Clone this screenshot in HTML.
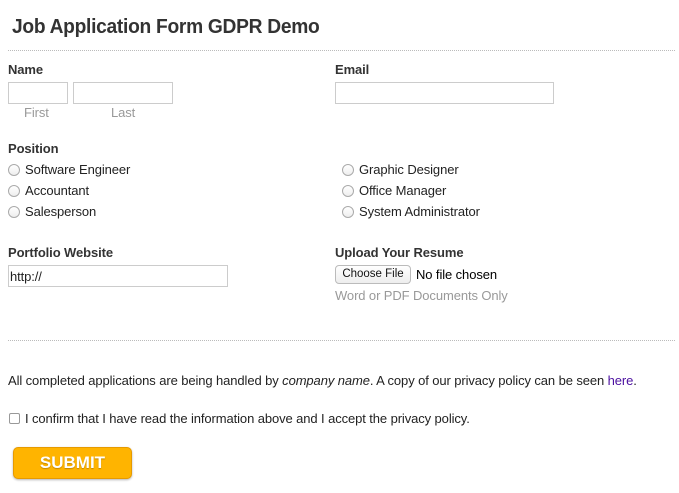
<!DOCTYPE html>
<html><head><meta charset="utf-8"><style>
body{margin:0;width:679px;height:493px;background:#fff;font-family:"Liberation Sans",sans-serif;color:#222;position:relative;overflow:hidden}
.a{position:absolute;white-space:nowrap}
.t{font-size:13px;letter-spacing:-0.1px}
.b{font-weight:bold;font-size:13px;color:#333}
.g{color:#999}
.in{position:absolute;border:1px solid #ccc;background:#fff;box-sizing:border-box}
.r{position:absolute;width:12px;height:12px;border:1px solid #aaa;border-radius:50%;box-sizing:border-box;background:linear-gradient(#fff,#eee)}
.dl{position:absolute;left:8px;width:667px;border-top:1px dotted #bbb}
</style></head><body>
<div class="a" style="left:12px;top:16px;font-size:20px;font-weight:bold;color:#333;transform:scaleX(0.96);transform-origin:0 0;letter-spacing:-0.3px">Job Application Form GDPR Demo</div>
<div class="dl" style="top:50px"></div>

<div class="a t b" style="left:8px;top:62px">Name</div>
<div class="in" style="left:8px;top:82px;width:60px;height:22px"></div>
<div class="in" style="left:73px;top:82px;width:100px;height:22px"></div>
<div class="a t g" style="left:24px;top:105px">First</div>
<div class="a t g" style="left:111px;top:105px">Last</div>
<div class="a t b" style="left:335px;top:62px">Email</div>
<div class="in" style="left:335px;top:82px;width:219px;height:22px"></div>

<div class="a t b" style="left:8px;top:141px">Position</div>
<div class="r" style="left:8px;top:164px"></div><div class="a t" style="left:25px;top:162px">Software Engineer</div>
<div class="r" style="left:8px;top:185px"></div><div class="a t" style="left:25px;top:183px">Accountant</div>
<div class="r" style="left:8px;top:206px"></div><div class="a t" style="left:25px;top:204px">Salesperson</div>
<div class="r" style="left:342px;top:164px"></div><div class="a t" style="left:359px;top:162px">Graphic Designer</div>
<div class="r" style="left:342px;top:185px"></div><div class="a t" style="left:359px;top:183px">Office Manager</div>
<div class="r" style="left:342px;top:206px"></div><div class="a t" style="left:359px;top:204px">System Administrator</div>

<div class="a t b" style="left:8px;top:245px">Portfolio Website</div>
<div class="in" style="left:8px;top:265px;width:220px;height:22px"></div>
<div class="a t" style="left:10px;top:269px">http://</div>
<div class="a t b" style="left:335px;top:245px">Upload Your Resume</div>
<div class="a" style="left:335px;top:265px;width:76px;height:19px;border:1px solid #bbb;border-radius:4px;background:linear-gradient(#fff,#eee);box-sizing:border-box;font-size:11.5px;text-align:center;line-height:17px;color:#111">Choose File</div>
<div class="a t" style="left:416px;top:267px;color:#000">No file chosen</div>
<div class="a t g" style="left:335px;top:288px">Word or PDF Documents Only</div>

<div class="dl" style="top:340px"></div>
<div class="a t" style="left:8px;top:373px">All completed applications are being handled by <i>company name</i>. A copy of our privacy policy can be seen <span style="color:#4b0fa0">here</span>.</div>
<div class="a" style="left:9px;top:413px;width:11px;height:11px;border:1px solid #999;border-radius:2px;box-sizing:border-box"></div>
<div class="a t" style="left:25px;top:411px">I confirm that I have read the information above and I accept the privacy policy.</div>

<div class="a" style="left:13px;top:447px;width:119px;height:32px;box-sizing:border-box;border:1px solid #e69a00;border-radius:5px;background:#ffb400;box-shadow:0 1px 2px rgba(0,0,0,.3)"></div>
<div class="a" style="left:13px;top:453px;width:119px;text-align:center;color:#fff;font-weight:bold;font-size:17px;text-shadow:0 1px 1px rgba(0,0,0,.25)">SUBMIT</div>
</body></html>
